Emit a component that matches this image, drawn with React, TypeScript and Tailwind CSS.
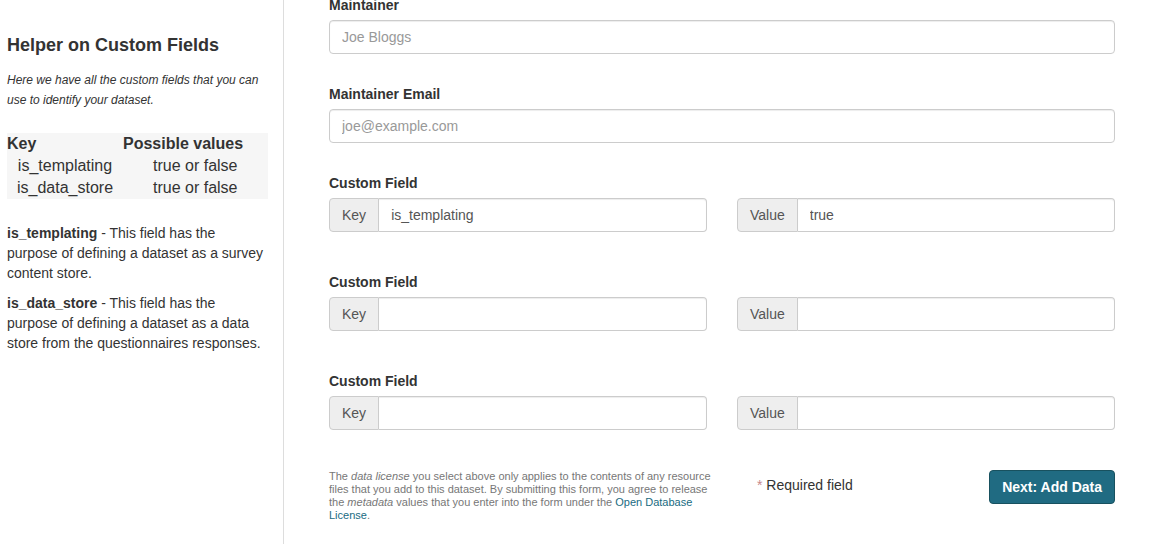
import React from "react";

type FieldProps = { label: string; placeholder: string };

const TextField: React.FC<FieldProps> = ({ label, placeholder }) => (
  <div className="mb-[30px]">
    <label className="block text-[14px] font-bold leading-5 mb-[5px] text-[#333]">{label}</label>
    <input
      className="w-full h-[34px] px-3 text-[14px] text-[#555] placeholder:text-[#999] border border-[#ccc] rounded-[4px] shadow-[inset_0_1px_1px_rgba(0,0,0,0.075)] outline-none"
      placeholder={placeholder}
    />
  </div>
);

const Addon: React.FC<{ name: string; value?: string }> = ({ name, value }) => (
  <div className="flex h-[34px] w-full">
    <span className="flex items-center px-3 text-[14px] text-[#555] bg-[#eee] border border-[#ccc] rounded-l-[4px]">
      {name}
    </span>
    <input
      className="flex-1 min-w-0 px-3 text-[14px] text-[#555] border border-l-0 border-[#ccc] rounded-r-[4px] shadow-[inset_0_1px_1px_rgba(0,0,0,0.075)] outline-none"
      defaultValue={value}
    />
  </div>
);

const CustomField: React.FC<{ k?: string; v?: string }> = ({ k, v }) => (
  <div className="mb-[40px]">
    <label className="block text-[14px] font-bold leading-5 mb-[5px] text-[#333]">Custom Field</label>
    <div className="grid grid-cols-2 gap-[30px]">
      <Addon name="Key" value={k} />
      <Addon name="Value" value={v} />
    </div>
  </div>
);

const Sidebar: React.FC = () => (
  <aside className="w-[284px] shrink-0 border-r border-[#ddd] pl-[7px] pr-[15px] pt-[35px] text-[#333]">
    <h2 className="text-[18px] font-bold leading-5">Helper on Custom Fields</h2>
    <p className="mt-[15px] text-[12px] italic leading-5">
      Here we have all the custom fields that you can use to identify your dataset.
    </p>
    <table className="mt-[23px] w-full bg-[#f6f6f6] text-[16px] leading-[22px]">
      <thead>
        <tr>
          <th className="text-left font-bold w-[116px]">Key</th>
          <th className="text-left font-bold">Possible values</th>
        </tr>
      </thead>
      <tbody>
        <tr>
          <td className="text-center">is_templating</td>
          <td className="text-left pl-[30px]">true or false</td>
        </tr>
        <tr>
          <td className="text-center">is_data_store</td>
          <td className="text-left pl-[30px]">true or false</td>
        </tr>
      </tbody>
    </table>
    <p className="mt-[24px] text-[14px] leading-5">
      <b>is_templating</b> - This field has the purpose of defining a dataset as a survey content store.
    </p>
    <p className="mt-[10px] text-[14px] leading-5">
      <b>is_data_store</b> - This field has the purpose of defining a dataset as a data store from the
      questionnaires responses.
    </p>
  </aside>
);

export default function App() {
  return (
    <div className="flex h-[544px] w-[1152px] overflow-hidden bg-white font-['Liberation_Sans',Arial,sans-serif]">
      <Sidebar />
      <main className="flex-1 pl-[45px] pr-[37px] mt-[-5px]">
        <TextField label="Maintainer" placeholder="Joe Bloggs" />
        <TextField label="Maintainer Email" placeholder="joe@example.com" />
        <CustomField k="is_templating" v="true" />
        <CustomField />
        <CustomField />
        <div className="flex items-start">
          <p className="w-[390px] text-[11px] leading-[13px] text-[#777]">
            The <em>data license</em> you select above only applies to the contents of any resource files that
            you add to this dataset. By submitting this form, you agree to release the <em>metadata</em> values
            that you enter into the form under the{" "}
            <a className="text-[#206b82]" href="#">Open Database License</a>.
          </p>
          <p className="ml-[38px] mt-[5px] text-[14px] leading-5 text-[#333]">
            <span className="text-[#c6898b]">*</span> Required field
          </p>
          <button className="ml-auto h-[34px] px-3 rounded-[4px] bg-[#206b82] border border-[#18515f] text-white text-[14px] font-bold">
            Next: Add Data
          </button>
        </div>
      </main>
    </div>
  );
}
